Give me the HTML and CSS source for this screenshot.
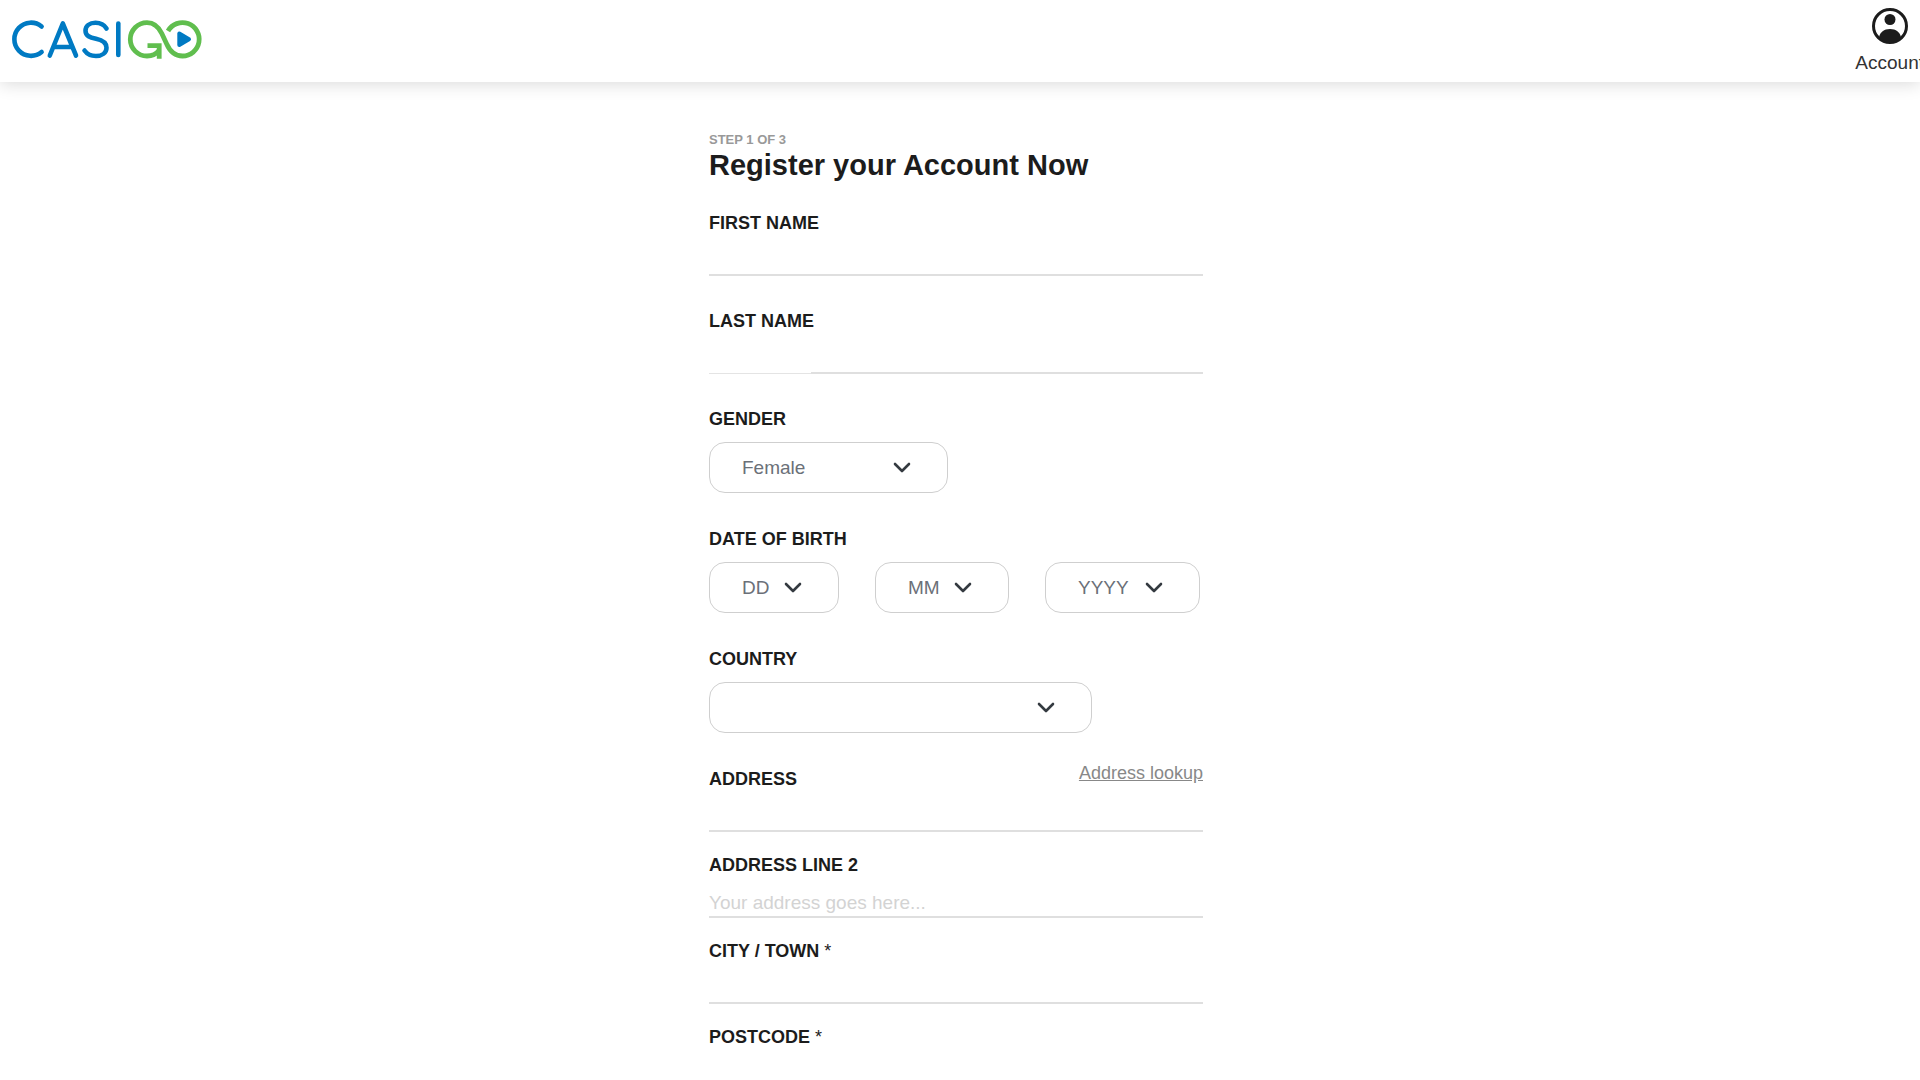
FILE: index.html
```html
<!DOCTYPE html>
<html lang="en">
<head>
    <meta charset="UTF-8">
    <meta name="viewport" content="width=device-width, initial-scale=1.0">
    <title>CasiGO - Register</title>
    <link rel="stylesheet" href="styles.css">
</head>
<body>
    <header class="site-header">
        <a class="logo" href="#" aria-label="CasiGO">
            <svg width="190" height="40" viewBox="0 0 190 40" fill="none" stroke-linecap="round" stroke-linejoin="round">
                <g stroke="#007ac3" stroke-width="4.6">
                    <path d="M28.600 6.500A16.600 16.600 0 1 0 28.600 32"/>
                    <path d="M36.800 35.500L49.800 3.500L63 35.500M41.500 27H58.500"/>
                    <path d="M93.500 8.500C91 4.500 87 2.800 82.500 2.800C76.500 2.800 72.500 6 72.500 10.800C72.500 16 77 17.500 83 18.800C89.500 20.200 93.500 22.700 93.500 27.700C93.500 32.800 89 36 83 36C77.500 36 74 34 71.500 30.500"/>
                    <path d="M105.300 3.500V35"/>
                </g>
                <g stroke="#60be4e" stroke-width="4.800">
                    <path stroke-linecap="butt" stroke-linejoin="miter" d="M134.500 25.700H146.200V38.700"/>
                    <path stroke-linecap="butt" d="M146 30.500C143 34.300 139 36 134 36A16.700 16.700 0 1 1 134 2.600C141 2.600 145.500 6.500 148.800 13.500L153.700 24C157 31.500 162 36 169.500 36A16.700 16.700 0 1 0 155 11"/>
                </g>
                <path d="M166.300 13.500V25L176 19.200Z" fill="#007ac3" stroke="#007ac3" stroke-width="4"/>
            </svg>
        </a>
        <a class="account" href="#">
            <svg width="36" height="36" viewBox="0 0 36 36">
                <circle cx="18" cy="18" r="16.500" fill="#fff" stroke="#1c1c1c" stroke-width="3"/>
                <circle cx="18" cy="11.500" r="5.500" fill="#1c1c1c"/>
                <path d="M7 29.500C8 24 12 21 18 21S28 24 29 29.500C26 33 22 34.500 18 34.500S10 33 7 29.500Z" fill="#1c1c1c"/>
            </svg>
            <span>Account</span>
        </a>
    </header>

    <main class="page">
        <form class="register">
            <p class="step">STEP 1 OF 3</p>
            <h1>Register your Account Now</h1>

            <div class="form-group">
                <label for="first-name">FIRST NAME</label>
                <input type="text" id="first-name">
            </div>
            <div class="form-group">
                <label for="last-name">LAST NAME</label>
                <input type="text" id="last-name" class="underline-split">
            </div>
            <div class="form-group">
                <label for="gender">GENDER</label>
                <select id="gender" class="select-gender">
                    <option>Female</option>
                    <option>Male</option>
                </select>
            </div>
            <div class="form-group">
                <label for="day">DATE OF BIRTH</label>
                <div class="date-row">
                    <select id="day" class="select-day"><option>DD</option></select>
                    <select id="month" class="select-month" aria-label="Month"><option>MM</option></select>
                    <select id="year" class="select-year" aria-label="Year"><option>YYYY</option></select>
                </div>
            </div>
            <div class="form-group">
                <label for="country">COUNTRY</label>
                <select id="country" class="select-country"><option></option></select>
            </div>
            <div class="form-group compact">
                <div class="label-row">
                    <label for="address">ADDRESS</label>
                    <a class="lookup" href="#">Address lookup</a>
                </div>
                <input type="text" id="address">
            </div>
            <div class="form-group compact">
                <label for="address2">ADDRESS LINE 2</label>
                <input type="text" id="address2" placeholder="Your address goes here...">
            </div>
            <div class="form-group compact">
                <label for="city">CITY / TOWN <span class="required">*</span></label>
                <input type="text" id="city">
            </div>
            <div class="form-group compact">
                <label for="postcode">POSTCODE <span class="required">*</span></label>
                <input type="text" id="postcode">
            </div>
        </form>
    </main>
</body>
</html>
```
FILE: styles.css
```css
* {
    box-sizing: border-box;
}
body {
    margin: 0;
    font-family: "Liberation Sans", Arial, sans-serif;
    color: #1c1c1c;
    background-color: #fff;
    overflow-x: hidden;
}
.site-header {
    display: flex;
    justify-content: space-between;
    align-items: flex-start;
    padding: 0 0 0 13px;
    height: 82px;
    box-shadow: 0 2px 16px rgba(0, 0, 0, 0.15);
}
.logo {
    padding-top: 20px;
}
.logo svg {
    display: block;
    overflow: visible;
}
.account {
    display: flex;
    flex-direction: column;
    align-items: center;
    gap: 8px;
    padding-top: 8px;
    margin-right: -4px;
    font-size: 19px;
    line-height: 22px;
    color: #333;
    text-decoration: none;
}
.page {
    padding: 50px 8px 0 0;
}
.register {
    max-width: 494px;
    margin: 0 auto;
}
.step {
    margin: 0;
    font-size: 13px;
    line-height: 15px;
    font-weight: bold;
    color: #999;
}
h1 {
    margin: 0 0 28px;
    font-size: 29px;
    line-height: 36px;
}
.form-group {
    margin-bottom: 34px;
}
.compact {
    margin-bottom: 21px;
}
label {
    display: block;
    font-size: 18px;
    line-height: 24px;
    font-weight: bold;
}
.required {
    font-weight: normal;
}
.label-row {
    display: flex;
    justify-content: space-between;
    align-items: flex-start;
}
.lookup {
    font-size: 18px;
    line-height: 12px;
    color: #888;
}
input {
    display: block;
    width: 100%;
    height: 41px;
    padding: 12px 0 0;
    border: none;
    border-bottom: 2px solid #dfdfdf;
    background: none;
    font-family: inherit;
    font-size: 19px;
    color: #1c1c1c;
}
.form-group:not(.compact) input {
    margin-bottom: -1px;
}
input::placeholder {
    color: #d3d3d3;
}
/* thinner rule under the label's width */
.underline-split {
    padding-bottom: 2px;
    border-bottom: none;
    background:
        linear-gradient(#dfdfdf, #dfdfdf) right bottom / calc(100% - 102px) 2px no-repeat,
        linear-gradient(#e4e4e4, #e4e4e4) left bottom / 102px 1px no-repeat;
}
select {
    display: block;
    height: 51px;
    padding: 0 32px;
    border: 1px solid #cfcfcf;
    border-radius: 16px;
    appearance: none;
    background: #fff url("data:image/svg+xml,%3Csvg xmlns='http://www.w3.org/2000/svg' width='18' height='12' fill='none' stroke='%23343a40' stroke-width='2.6' stroke-linecap='round' stroke-linejoin='round'%3E%3Cpath d='M2 2l7 7 7-7'/%3E%3C/svg%3E") no-repeat right 36px center;
    font-family: inherit;
    font-size: 19px;
    color: #6b7078;
}
.form-group > select,
.date-row {
    margin-top: 11px;
}
.date-row {
    display: flex;
    gap: 36px;
}
.select-gender {
    width: 239px;
}
.select-day {
    width: 130px;
}
.select-month {
    width: 134px;
}
.select-year {
    width: 155px;
}
.select-country {
    width: 383px;
}
```
